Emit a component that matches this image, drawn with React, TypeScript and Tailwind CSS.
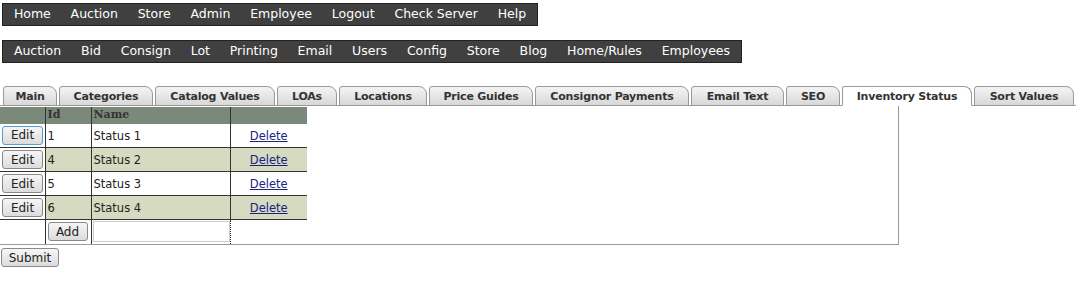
import React from 'react';

const topNav = ['Home', 'Auction', 'Store', 'Admin', 'Employee', 'Logout', 'Check Server', 'Help'];
const subNav = ['Auction', 'Bid', 'Consign', 'Lot', 'Printing', 'Email', 'Users', 'Config', 'Store', 'Blog', 'Home/Rules', 'Employees'];
const tabs = [
  { label: 'Main', w: 'w-[54px]' },
  { label: 'Categories', w: 'w-[94px]' },
  { label: 'Catalog Values', w: 'w-[120px]' },
  { label: 'LOAs', w: 'w-[60px]' },
  { label: 'Locations', w: 'w-[88px]' },
  { label: 'Price Guides', w: 'w-[104px]' },
  { label: 'Consignor Payments', w: 'w-[154px]' },
  { label: 'Email Text', w: 'w-[93px]' },
  { label: 'SEO', w: 'w-[54px]' },
  { label: 'Inventory Status', w: 'w-[130px]' },
  { label: 'Sort Values', w: 'w-[100px]' },
];
const rows = [
  { id: 1, name: 'Status 1' },
  { id: 4, name: 'Status 2' },
  { id: 5, name: 'Status 3' },
  { id: 6, name: 'Status 4' },
];

function NavBar({ items }: { items: string[] }) {
  return (
    <div className="flex h-[23px] w-fit items-center border border-[#222] bg-[#404040] px-px">
      {items.map((item, i) => (
        <a key={i} className="whitespace-nowrap px-[9.9px] text-[12.5px] leading-none text-white">
          {item}
        </a>
      ))}
    </div>
  );
}

function Btn({ label, focus, className }: { label: string; focus?: boolean; className?: string }) {
  return (
    <button
      className={
        'block h-[19px] rounded-[3px] border bg-gradient-to-b from-[#f6f6f6] to-[#dcdcdc] text-[12px] leading-none text-[#222] ' +
        (focus ? 'border-[#4ea0d8] ' : 'border-[#8a8a8a] ') +
        (className || '')
      }
    >
      {label}
    </button>
  );
}

export default function App() {
  return (
    <div className="min-h-[283px] bg-white pt-[3px] text-[#222]" style={{ fontFamily: '"DejaVu Sans", Verdana, sans-serif' }}>
      <div className="pl-[2px]">
        <NavBar items={topNav} />
      </div>
      <div className="mt-[14px] pl-[2px]">
        <NavBar items={subNav} />
      </div>

      <div className="mt-[23px] flex w-[1076px] items-end gap-[2px] border-b border-[#9a9a9a] pl-[3px]">
        {tabs.map((t) => {
          const active = t.label === 'Inventory Status';
          return (
            <div
              key={t.label}
              className={
                'relative -mb-px flex h-[20px] shrink-0 items-center justify-center whitespace-nowrap rounded-tl-[3px] rounded-tr-[8px] border border-[#9a9a9a] pt-px text-[11px] font-bold leading-none tracking-[-0.2px] text-[#333] ' +
                t.w +
                (active ? ' border-b-white bg-white' : ' bg-gradient-to-b from-[#f4f4f4] to-[#d8d8d8]')
              }
            >
              {t.label}
            </div>
          );
        })}
      </div>

      <div className="h-[139px] w-[899px] border-r border-b border-[#9a9a9a] pt-px">
        <table className="w-[307px] border-collapse text-[11.5px]">
          <thead>
            <tr className="h-[16px] bg-[#7b897b] text-left">
              <th className="w-[45px] border-r border-[#333] p-0"></th>
              <th className="w-[46px] border-r border-[#333] px-[2px] py-0 text-[11px] font-bold text-[#333]" style={{ fontFamily: '"DejaVu Serif", Georgia, serif' }}>Id</th>
              <th className="w-[138px] border-r border-[#333] px-[2px] py-0 text-[11px] font-bold text-[#333]" style={{ fontFamily: '"DejaVu Serif", Georgia, serif' }}>Name</th>
              <th className="p-0"></th>
            </tr>
          </thead>
          <tbody>
            {rows.map((r, i) => (
              <tr key={r.id} className={'h-[24px] border-b border-[#333] ' + (i % 2 ? 'bg-[#d6dac1]' : 'bg-white')}>
                <td className="border-r border-[#333] bg-white p-0 pl-[2px]">
                  <Btn label="Edit" focus={i === 0} className="w-[41px]" />
                </td>
                <td className="border-r border-[#333] px-[2px] pt-[2px] pb-0">{r.id}</td>
                <td className="border-r border-[#333] px-[2px] pt-[2px] pb-0">{r.name}</td>
                <td className="p-0 pt-[2px] text-center">
                  <a href="#" className="text-[#1a237e] underline">Delete</a>
                </td>
              </tr>
            ))}
            <tr className="h-[24px]">
              <td className="border-r border-[#333] p-0"></td>
              <td className="border-r border-[#333] p-0 pl-[2px]">
                <Btn label="Add" className="w-[40px]" />
              </td>
              <td className="border-r border-dotted border-[#333] p-0 pl-px">
                <input className="block h-[21px] w-[137px] border border-[#ccc] bg-white outline-none" />
              </td>
              <td className="p-0"></td>
            </tr>
          </tbody>
        </table>
      </div>

      <div className="mt-[3px] pl-px">
        <Btn label="Submit" className="w-[58px]" />
      </div>
    </div>
  );
}
